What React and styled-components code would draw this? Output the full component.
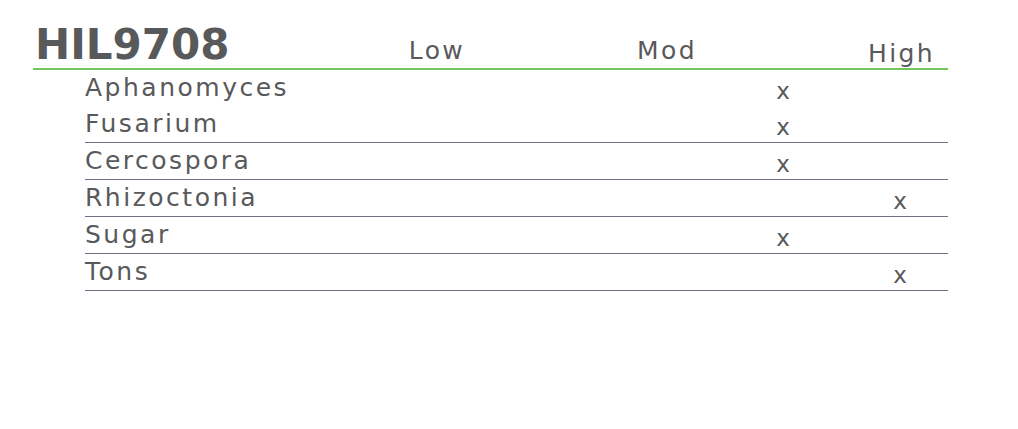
import React from "react";
import styled, { createGlobalStyle } from "styled-components";

const GlobalStyle = createGlobalStyle`
  body {
    margin: 0;
    background: #ffffff;
    font-family: "DejaVu Sans", "Liberation Sans", sans-serif;
    color: #58595b;
  }
`;

const Page = styled.div`
  width: 1018px;
  height: 429px;
  padding: 0 0 0 33px;
  box-sizing: border-box;
`;

const Sheet = styled.div`
  width: 915px;
`;

const Header = styled.div`
  display: grid;
  grid-template-columns: 289px 230px 230px 1fr;
  align-items: end;
  height: 70px;
  box-sizing: border-box;
  border-bottom: 2px solid #74c65a;
`;

const Title = styled.h1`
  margin: 0 0 2px 2px;
  font-family: "DejaVu Sans", "Liberation Sans", sans-serif;
  font-weight: 700;
  font-size: 42px;
  line-height: 42px;
  color: #58595b;
`;

const Level = styled.div`
  font-size: 25px;
  line-height: 30px;
  letter-spacing: 2.4px;
  justify-self: ${(p) => (p.$end ? "end" : "center")};
  padding-right: ${(p) => (p.$end ? "13px" : "0")};
  margin-bottom: ${(p) => (p.$end ? "-1px" : "2px")};
`;

const Rows = styled.div`
  margin-left: 52px;
`;

const Row = styled.div`
  display: grid;
  grid-template-columns: 1fr 117px 138px 96px;
  align-items: center;
  height: ${(p) => (p.$noRule ? "36px" : "37px")};
  box-sizing: border-box;
  padding-bottom: 2px;
  border-bottom: ${(p) => (p.$noRule ? "none" : "1px solid #6d7183")};
`;

const Name = styled.div`
  font-size: 25px;
  letter-spacing: 2.5px;
  line-height: 30px;
  white-space: nowrap;
`;

const Mark = styled.div`
  justify-self: center;
  font-size: 23px;
  line-height: 30px;
  padding-top: 6px;
`;

const data = [
  { name: "Aphanomyces", level: 1 },
  { name: "Fusarium", level: 1 },
  { name: "Cercospora", level: 1 },
  { name: "Rhizoctonia", level: 2 },
  { name: "Sugar", level: 1 },
  { name: "Tons", level: 2 },
];

export default function App() {
  return (
    <Page>
      <GlobalStyle />
      <Sheet>
        <Header>
          <Title>HIL9708</Title>
          <Level>Low</Level>
          <Level>Mod</Level>
          <Level $end>High</Level>
        </Header>
        <Rows>
          {data.map((row, i) => (
            <Row key={row.name} $noRule={i === 0}>
              <Name>{row.name}</Name>
              {[0, 1, 2].map((col) => (
                <Mark key={col}>{row.level === col ? "x" : ""}</Mark>
              ))}
            </Row>
          ))}
        </Rows>
      </Sheet>
    </Page>
  );
}
